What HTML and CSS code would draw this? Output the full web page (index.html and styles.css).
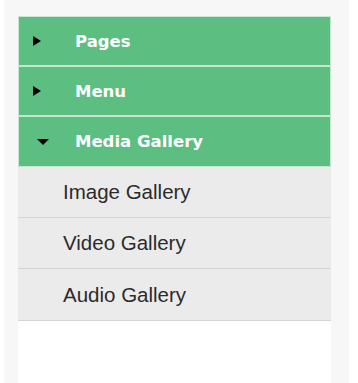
FILE: index.html
```html
<!DOCTYPE html>
<html lang="en">
	<head>
		<meta charset="UTF-8" />
		<meta name="viewport" content="width=device-width, initial-scale=1.0" />
		<title>Menu</title>
		<link rel="stylesheet" href="styles.css">
	</head>
	<body>
		<div class="panel">
			<div class="sidebar">
				<ul class="menu">
					<li class="menu__item">
						<a class="menu__head" href="#">
							<span class="menu__arrow">
								<svg width="8" height="10" viewBox="0 0 8 10"><path d="M0 0 L8 5 L0 10 Z" fill="#000"/></svg>
							</span>
							Pages
						</a>
					</li>
					<li class="menu__item">
						<a class="menu__head" href="#">
							<span class="menu__arrow">
								<svg width="8" height="10" viewBox="0 0 8 10"><path d="M0 0 L8 5 L0 10 Z" fill="#000"/></svg>
							</span>
							Menu
						</a>
					</li>
					<li class="menu__item open">
						<a class="menu__head" href="#">
							<span class="menu__arrow menu__arrow--down">
								<svg width="12" height="6" viewBox="0 0 12 6"><path d="M0 0 L12 0 L6 6 Z" fill="#000"/></svg>
							</span>
							Media Gallery
						</a>
						<ul class="submenu">
							<li><a href="#">Image Gallery</a></li>
							<li><a href="#">Video Gallery</a></li>
							<li><a href="#">Audio Gallery</a></li>
						</ul>
					</li>
				</ul>
			</div>
		</div>
	</body>
</html>
```

FILE: styles.css
```css
* {
	box-sizing: border-box;
	margin: 0;
	padding: 0;
}

body {
	background-color: #fff;
	font-family: "DejaVu Sans", sans-serif;
}

.panel {
	width: 345px;
	height: 383px;
	margin-left: 4px;
	padding: 16px 18px 0 14px;
	background-color: #f7f7f7;
}

.sidebar {
	height: 100%;
	background-color: #fff;
}

.menu {
	list-style: none;
}

.menu__head {
	display: flex;
	align-items: center;
	height: 50px;
	padding-left: 14px;
	background-color: #5dbe82;
	border: 1px solid #c6e7d2;
	color: #fff;
	font-size: 16.5px;
	font-weight: bold;
	text-decoration: none;
}

.open .menu__head {
	height: 51px;
}

.menu__arrow {
	display: flex;
	align-items: center;
	width: 16px;
	margin-right: 26px;
}

.menu__arrow--down {
	padding-left: 4px;
}

.submenu {
	list-style: none;
}

.submenu a {
	display: flex;
	align-items: center;
	height: 51px;
	padding-left: 45px;
	background-color: #ebebeb;
	border-bottom: 1px solid #d5d5d5;
	color: #2b2b2b;
	font-family: "Liberation Sans", Arial, sans-serif;
	font-size: 20.5px;
	text-decoration: none;
}

.submenu li:last-child a {
	height: 52px;
}
```
